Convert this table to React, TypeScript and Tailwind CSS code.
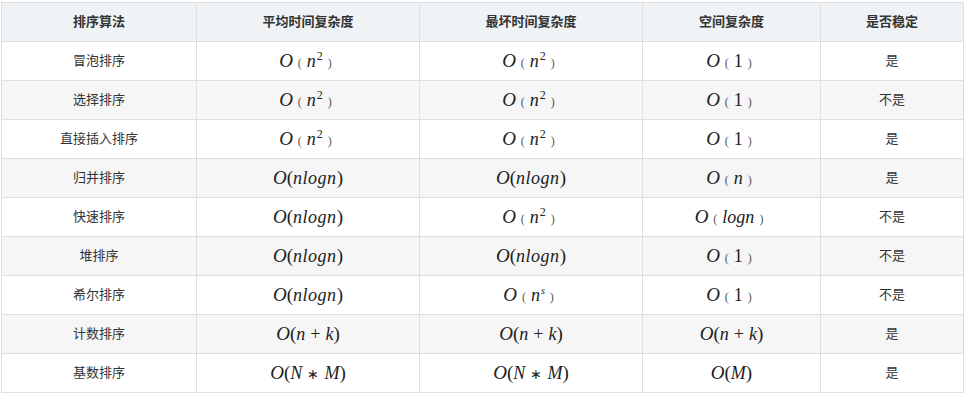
import React from 'react';

const cols = ['w-[195px]', 'w-[223px]', 'w-[223px]', 'w-[178px]', 'w-[143px]'];

const headers = ['排序算法', '平均时间复杂度', '最坏时间复杂度', '空间复杂度', '是否稳定'];

// loose form: O ( x ) with small parentheses
const Loose = ({ children }: { children: React.ReactNode }) => (
  <span className="inline-flex items-baseline">
    <i className="text-[19px]">O</i>
    <span className="text-[12px] mx-[5px] text-[#555]">(</span>
    {children}
    <span className="text-[12px] mx-[5px] text-[#555]">)</span>
  </span>
);

// tight form: O(x) with full parentheses
const Tight = ({ children }: { children: React.ReactNode }) => (
  <span className="inline-flex items-baseline">
    <i className="text-[19px]">O</i>
    <span className="text-[19px]">(</span>
    {children}
    <span className="text-[19px]">)</span>
  </span>
);

const nSq = (
  <span className="text-[18px]">
    <i>n</i>
    <sup className="text-[12px] relative -top-[7px] ml-[1px]">2</sup>
  </span>
);
const nS = (
  <span className="text-[18px]">
    <i>n</i>
    <sup className="text-[10px] italic relative -top-[7px] ml-[1px]">s</sup>
  </span>
);

const oN2 = <Loose>{nSq}</Loose>;
const oNs = <Loose>{nS}</Loose>;
const o1 = <Loose><span className="text-[18px]">1</span></Loose>;
const oN = <Loose><i className="text-[18px]">n</i></Loose>;
const oLog = <Loose><i className="text-[18px]">logn</i></Loose>;
const oNlogn = <Tight><i className="text-[18px] tracking-[0.5px]">nlogn</i></Tight>;
const oNk = (
  <Tight>
    <i className="text-[18px]">n</i>
    <span className="text-[18px] mx-[5px]">+</span>
    <i className="text-[18px]">k</i>
  </Tight>
);
const oNM = (
  <Tight>
    <i className="text-[18px]">N</i>
    <span className="text-[14px] mx-[5px]">∗</span>
    <i className="text-[18px]">M</i>
  </Tight>
);
const oM = <Tight><i className="text-[18px]">M</i></Tight>;

const rows: [string, React.ReactNode, React.ReactNode, React.ReactNode, string][] = [
  ['冒泡排序', oN2, oN2, o1, '是'],
  ['选择排序', oN2, oN2, o1, '不是'],
  ['直接插入排序', oN2, oN2, o1, '是'],
  ['归并排序', oNlogn, oNlogn, oN, '是'],
  ['快速排序', oNlogn, oN2, oLog, '不是'],
  ['堆排序', oNlogn, oNlogn, o1, '不是'],
  ['希尔排序', oNlogn, oNs, o1, '不是'],
  ['计数排序', oNk, oNk, oNk, '是'],
  ['基数排序', oNM, oNM, oM, '是'],
];

export default function App() {
  return (
    <div className="w-[965px] h-[394px] bg-white overflow-hidden">
      <div className="ml-px mt-[2px] inline-flex flex-col border-l border-t border-[#dfdfdf] text-[#333] text-[13px] font-['Liberation_Sans','Noto_Sans_CJK_SC',sans-serif]">
        <div className="flex bg-[#eff3f6] font-bold">
          {headers.map((h, i) => (
            <div key={h} className={`${cols[i]} h-[39px] border-r border-b border-[#dfdfdf] flex items-center justify-center`}>
              {h}
            </div>
          ))}
        </div>
        {rows.map((r, ri) => (
          <div key={r[0]} className={`flex ${ri % 2 === 1 ? 'bg-[#f6f6f6]' : 'bg-white'}`}>
            {r.map((c, i) => (
              <div
                key={i}
                className={`${cols[i]} h-[39px] border-r border-b border-[#dfdfdf] flex items-center justify-center ${i >= 1 && i <= 3 ? "font-['Liberation_Serif',serif] text-[#222]" : ''}`}
              >
                {c}
              </div>
            ))}
          </div>
        ))}
      </div>
    </div>
  );
}
